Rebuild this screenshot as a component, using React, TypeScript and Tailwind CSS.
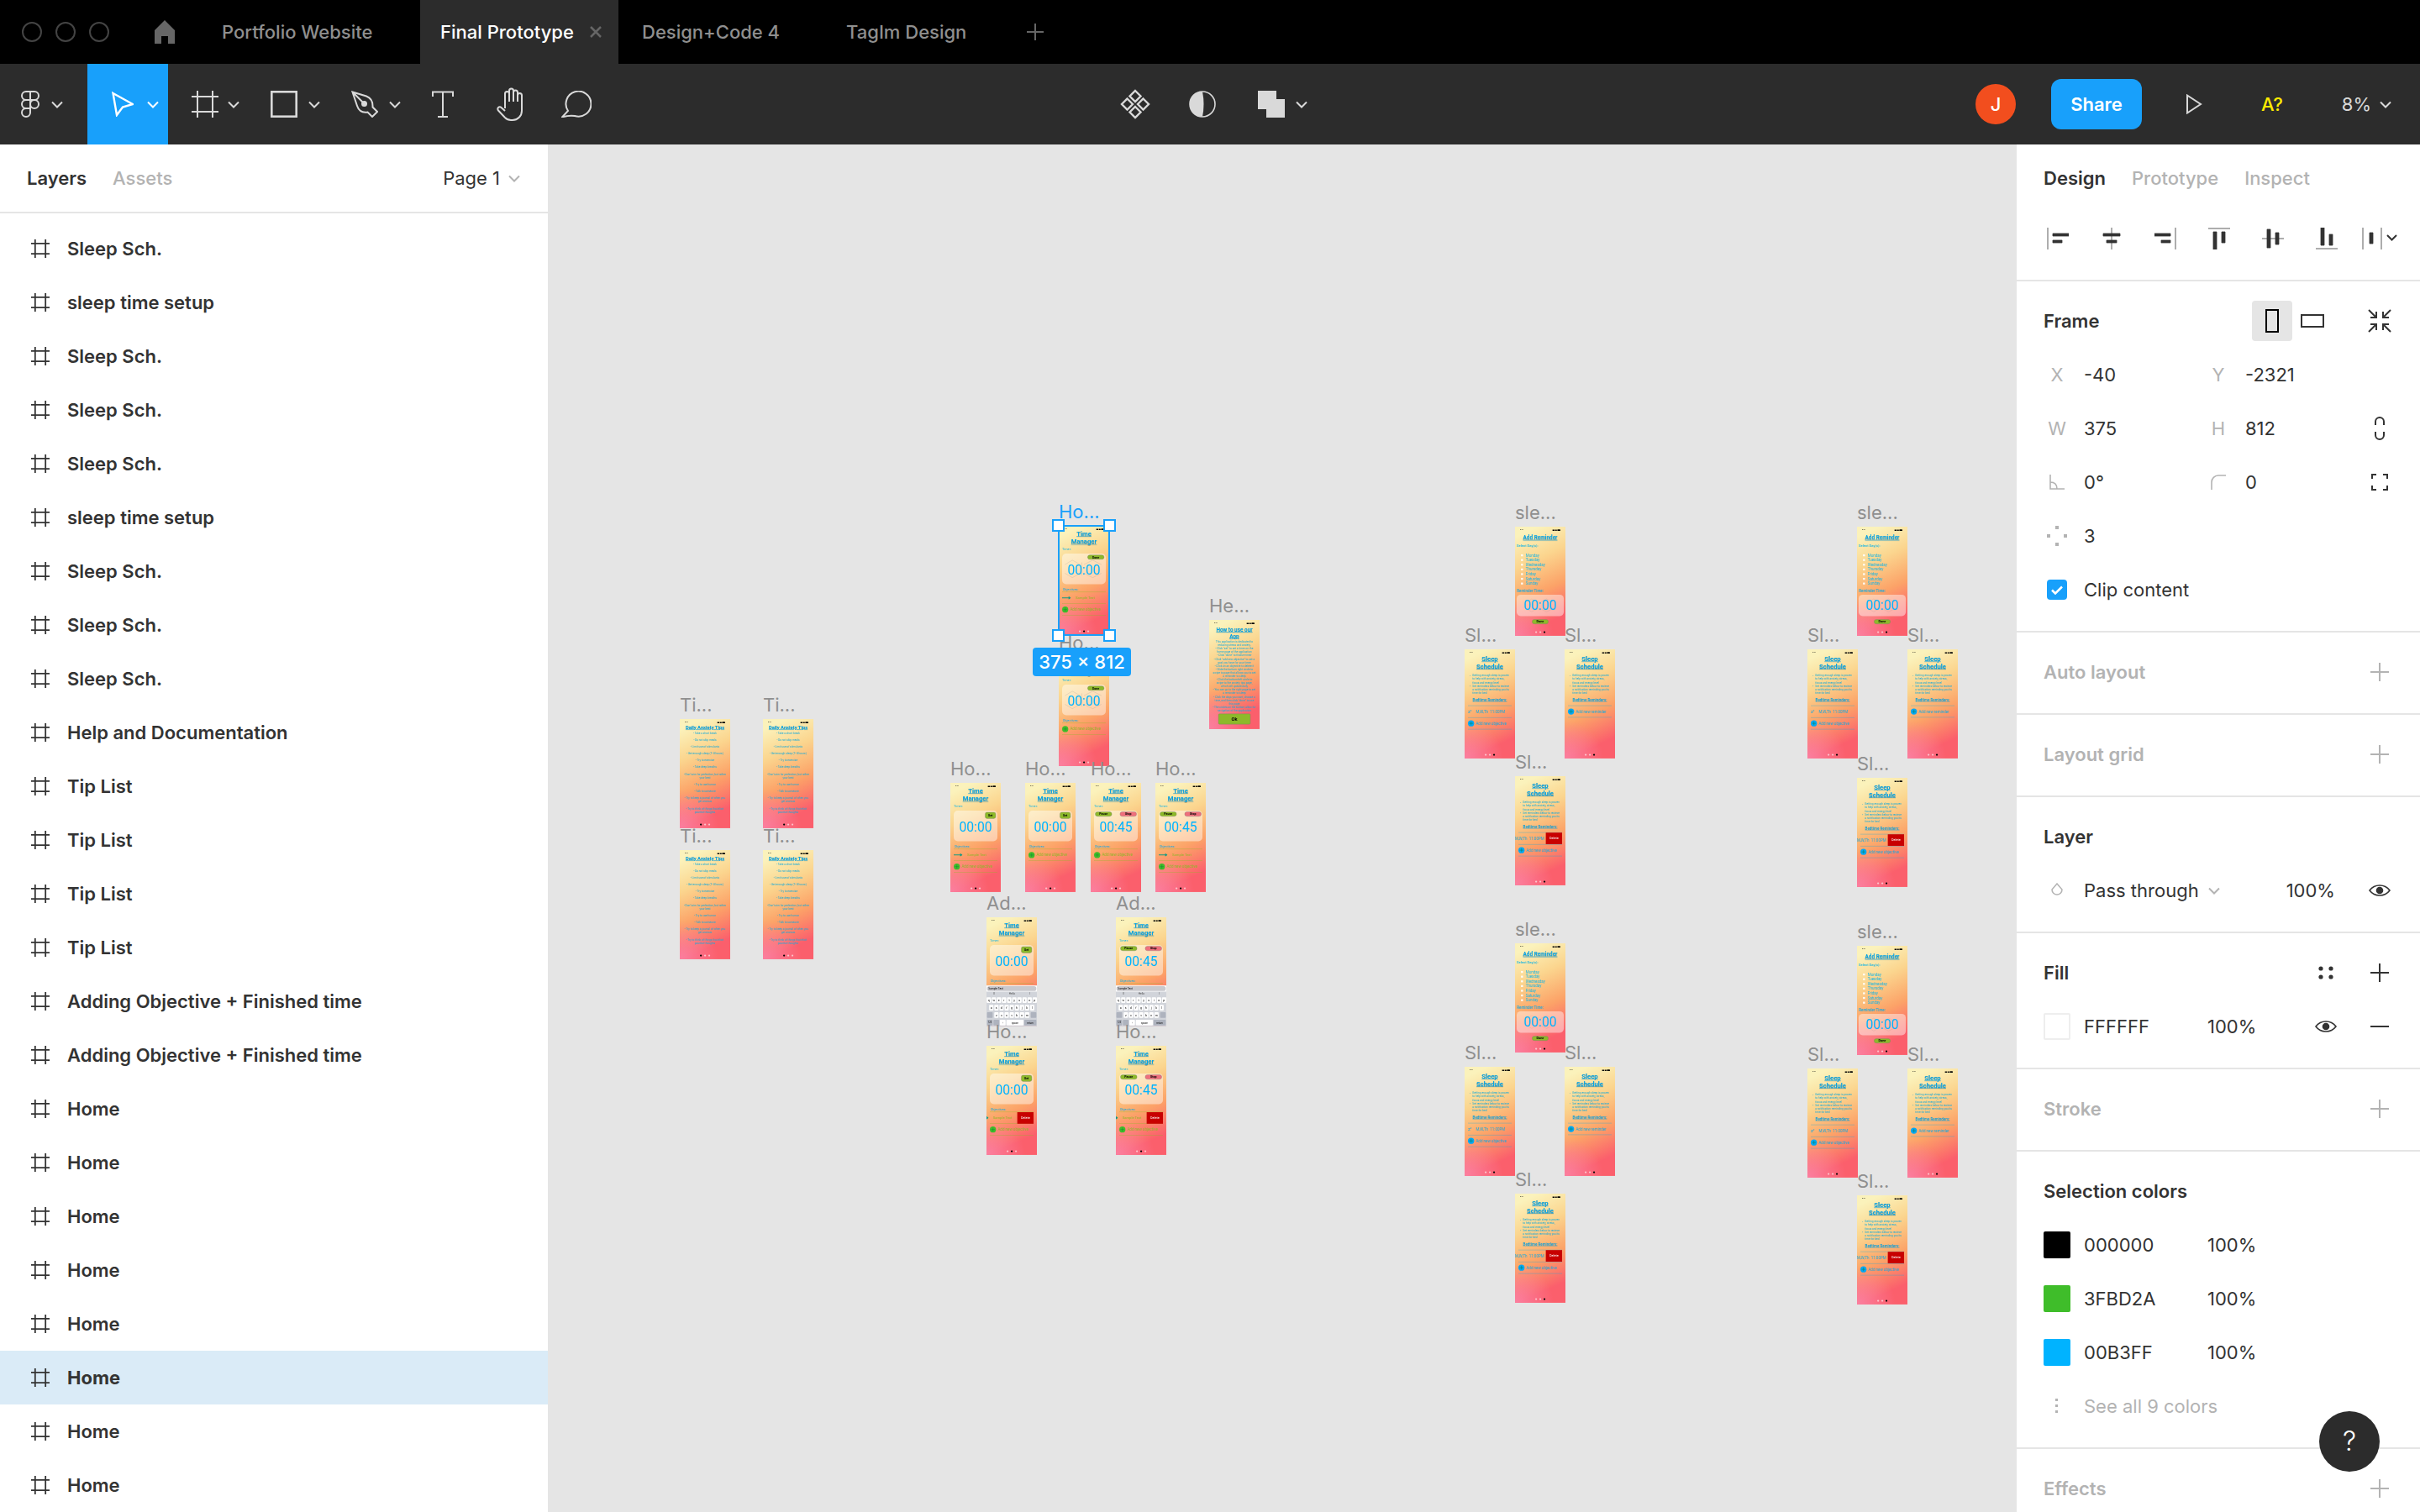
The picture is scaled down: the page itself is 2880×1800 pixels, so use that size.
import type { ReactNode } from 'react';

const CANVAS_LEFT = 652;
const CANVAS_TOP = 172;

const LAYERS = [
  'Sleep Sch.', 'sleep time setup', 'Sleep Sch.', 'Sleep Sch.', 'Sleep Sch.', 'sleep time setup', 'Sleep Sch.', 'Sleep Sch.', 'Sleep Sch.',
  'Help and Documentation', 'Tip List', 'Tip List', 'Tip List', 'Tip List', 'Adding Objective + Finished time', 'Adding Objective + Finished time',
  'Home', 'Home', 'Home', 'Home', 'Home', 'Home', 'Home', 'Home',
];

const TIPS = [
  '- Take a short break', '- Do not skip meals', '- Limit use of stimulants', '- Get enough sleep (7- 8 hours)', '- Try to exercise', '- Take deep breaths',
  "- Don't aim for perfection, but rather your best", '- Try to use humor', '- Talk to someone', '- Try to keep a journal of when you get anxious', '- Try to think of things that elicit positive thoughts',
];

const HELP_LINES = [
  'This application is dedicated to reducing stress and anxiety.',
  '- Click "set" to set a timer on the home page of the application',
  '- Click "done" to finalize timer',
  '- Click "add new objective" to set a goal you have for your timer',
  '- Click on an objective to delete it',
  '- Slide the bottom right circle to swipe to page that allows you to set a reminder to sleep',
  '- Click the bottom-left circle to swipe to the anxiety tips page, which will update daily',
  '- You can go to the right page to set a reminder to sleep',
  '- Click the days you want, choose a time, and then click "done" to use this page',
  '- The circles on the bottom allow for navigation of the application',
];

function Chevron({ className = 'text-[#d9d9d9]' }: { className?: string }) {
  return (
    <svg width="14" height="9" viewBox="0 0 14 9" fill="none" stroke="currentColor" strokeWidth="2" className={`shrink-0 ${className}`}>
      <path d="M1 1.5l6 6 6-6" />
    </svg>
  );
}

function FrameGlyph({ size = 32, className = '' }: { size?: number; className?: string }) {
  return (
    <svg width={size} height={size} viewBox="0 0 32 32" fill="none" stroke="currentColor" strokeWidth={size < 30 ? 2.6 : 2} className={`shrink-0 ${className}`}>
      <path d="M7 0v32M25 0v32M0 7h32M0 25h32" />
    </svg>
  );
}

function PlusIcon({ muted = false }: { muted?: boolean }) {
  return (
    <svg width="22" height="22" viewBox="0 0 22 22" stroke={muted ? '#b3b3b3' : '#333'} strokeWidth="2">
      <path d="M0 11h22M11 0v22" />
    </svg>
  );
}

function EyeIcon() {
  return (
    <svg width="26" height="14" viewBox="0 0 26 14" fill="none" stroke="#333" strokeWidth="1.6">
      <path d="M1 7c3-4 7.500-6 12-6s9 2 12 6c-3 4-7.500 6-12 6S4 11 1 7z" />
      <circle cx="13" cy="7" r="3.500" fill="#333" />
    </svg>
  );
}

function AlignIcon({ kind }: { kind: number }) {
  const bars: Record<number, ReactNode> = {
    0: <path d="M1 0v26M7 7h19v3H7zM7 15h11v3H7z" />,
    1: <path d="M13 0v26M3 7h20v3H3zM7 15h12v3H7z" />,
    2: <path d="M25 0v26M0 7h19v3H0zM8 15h11v3H8z" />,
    3: <path d="M0 1h26M6 5h4v21H6zM16 5h4v13h-4z" />,
    4: <path d="M0 13h26M6 2h4v22H6zM16 6h4v14h-4z" />,
    5: <path d="M0 25h26M6 0h4v21H6zM16 8h4v13h-4z" />,
  };
  return (
    <svg width="26" height="26" viewBox="0 0 26 26" fill="#333" stroke="#333" strokeWidth="0.8">
      {bars[kind]}
    </svg>
  );
}

function TabBar() {
  return (
    <div className="flex h-[76px] shrink-0 items-center bg-black text-[22px] font-medium text-[#8f8f8f]">
      <div className="flex w-[160px] gap-[16px] pl-[26px]">
        <span className="h-[24px] w-[24px] rounded-full border-2 border-[#444]" />
        <span className="h-[24px] w-[24px] rounded-full border-2 border-[#444]" />
        <span className="h-[24px] w-[24px] rounded-full border-2 border-[#444]" />
      </div>
      <svg width="24" height="28" viewBox="0 0 24 28" fill="#666" className="ml-[24px]">
        <path d="M12 0L24 12v16h-8v-9H8v9H0V12z" />
      </svg>
      <div className="ml-[32px] flex h-full w-[260px] items-center pl-[24px]">Portfolio Website</div>
      <div className="flex h-full w-[236px] items-center gap-[18px] bg-[#2c2c2c] pl-[24px] text-white">
        Final Prototype
        <svg width="16" height="16" viewBox="0 0 16 16" stroke="#666" strokeWidth="2.500"><path d="M2 2l12 12M14 2L2 14" /></svg>
      </div>
      <div className="flex h-full w-[247px] items-center pl-[28px]">Design+Code 4</div>
      <div className="flex h-full w-[225px] items-center pl-[24px]">TagIm Design</div>
      <svg width="20" height="20" viewBox="0 0 20 20" stroke="#666" strokeWidth="2" className="ml-[14px]"><path d="M0 10h20M10 0v20" /></svg>
    </div>
  );
}

function Toolbar() {
  const ic = 'fill-none stroke-[#d9d9d9] shrink-0';
  return (
    <div className="flex h-[96px] shrink-0 items-center bg-[#2c2c2c]">
      <div className="flex w-[104px] items-center gap-[14px] pl-[25px]">
        <svg width="22" height="32" viewBox="0 0 22 32" strokeWidth="2" className={ic}>
          <path d="M11 1H6a5 5 0 0 0 0 10h5zM11 1h5a5 5 0 0 1 0 10h-5zM11 11H6a5 5 0 0 0 0 10h5zM11 16a5 5 0 1 0 10 0a5 5 0 1 0-10 0zM11 21H6a5 5 0 1 0 5 5z" />
        </svg>
        <Chevron />
      </div>
      <div className="flex h-full w-[96px] items-center gap-[16px] bg-[#18a0fb] pl-[29px]">
        <svg width="26" height="30" viewBox="0 0 26 30" fill="none" stroke="white" strokeWidth="2.400" className="shrink-0">
          <path d="M1.500 2L25 15l-12 3.500L6 28z" />
        </svg>
        <Chevron className="text-white" />
      </div>
      <div className="flex w-[104px] items-center gap-[11px] pl-[28px] text-[#d9d9d9]">
        <FrameGlyph />
        <Chevron />
      </div>
      <div className="flex w-[96px] items-center gap-[13px] pl-[18px]">
        <svg width="32" height="32" viewBox="0 0 32 32" strokeWidth="2.600" className={ic}><rect x="1.300" y="1.300" width="29.400" height="29.400" /></svg>
        <Chevron />
      </div>
      <div className="flex w-[96px] items-center gap-[13px] pl-[18px]">
        <svg width="32" height="32" viewBox="0 0 32 32" strokeWidth="2" className={ic}>
          <path d="M1.500 1.500L18 6.500Q26 9.500 25.500 19.500L31 25l-6 6-5.500-5.500Q10 27 7 18zM1.500 1.500L15 15" />
          <circle cx="15.500" cy="15.500" r="2.500" fill="#d9d9d9" />
        </svg>
        <Chevron />
      </div>
      <svg width="26" height="32" viewBox="0 0 26 32" strokeWidth="2" className={`${ic} ml-[18px]`}>
        <path d="M1 7V1.500h24V7M13 1.500V31M7 31h12" />
      </svg>
      <svg width="36" height="40" viewBox="0 0 36 40" strokeWidth="2" className={`${ic} ml-[51px]`}>
        <path d="M10 25V7.500a2.500 2.500 0 0 1 5 0V17M15 17V4a2.500 2.500 0 0 1 5 0v13M20 17V6a2.500 2.500 0 0 1 5 0v11M25 17V9.500a2.500 2.500 0 0 1 5 0V28a11 11 0 0 1-11 11h-2c-3 0-5-1-7-3L2 27.500a2.400 2.400 0 0 1 3.500-3.500L10 28" />
      </svg>
      <svg width="36" height="32" viewBox="0 0 36 32" strokeWidth="2" className={`${ic} ml-[41px]`}>
        <path d="M8 24A15 15 0 1 1 16 30Q9 29 1 31.500z" />
      </svg>
      <svg width="36" height="36" viewBox="0 0 36 36" strokeWidth="2.400" className={`${ic} ml-[629px]`}>
        <path d="M18 2l6.500 6.500L18 15l-6.500-6.500zM8.500 11.500L15 18l-6.500 6.500L2 18zM27.500 11.500L34 18l-6.500 6.500L21 18zM18 21l6.500 6.500L18 34l-6.500-6.500z" />
      </svg>
      <svg width="32" height="32" viewBox="0 0 32 32" strokeWidth="1.600" className={`${ic} ml-[46px]`}>
        <circle cx="16" cy="16" r="15" />
        <path d="M16 1A15 15 0 0 0 16 31Q19 16 16 1z" fill="#d9d9d9" stroke="none" />
      </svg>
      <svg width="32" height="32" viewBox="0 0 32 32" fill="#d9d9d9" className="ml-[50px] shrink-0">
        <path d="M0 0h22v10h10v22H10V22H0z" />
      </svg>
      <span className="ml-[13px]"><Chevron /></span>
      <div className="ml-[795px] flex h-[48px] w-[48px] shrink-0 items-center justify-center rounded-full bg-[#f24e1e] text-[22px] font-medium text-white">J</div>
      <div className="ml-[42px] flex h-[60px] w-[108px] shrink-0 items-center justify-center rounded-[12px] bg-[#18a0fb] text-[22px] font-semibold text-white">Share</div>
      <svg width="20" height="24" viewBox="0 0 20 24" fill="none" stroke="#d9d9d9" strokeWidth="2" className="ml-[52px] shrink-0"><path d="M2 1.500L18 12 2 22.500z" /></svg>
      <span className="ml-[70px] text-[22px] font-medium text-[#ffeb00]">A?</span>
      <span className="ml-[70px] text-[22px] text-[#d9d9d9]">8%</span>
      <span className="ml-[10px]"><Chevron /></span>
    </div>
  );
}

function LayersPanel() {
  return (
    <div className="flex w-[652px] shrink-0 flex-col overflow-hidden bg-white text-[22px] text-[#333]">
      <div className="flex h-[82px] shrink-0 items-center border-b-2 border-[#e5e5e5] pl-[32px] pr-[33px]">
        <span className="font-semibold">Layers</span>
        <span className="ml-[31px] font-medium text-[#b3b3b3]">Assets</span>
        <span className="ml-auto font-normal">Page 1</span>
        <Chevron className="ml-[10px] text-[#b3b3b3]" />
      </div>
      <div className="pt-[10px]">
        {LAYERS.map((name, i) => (
          <div key={i} className={`flex h-[64px] items-center pl-[37px] ${i === 21 ? 'bg-[#daebf7] font-bold' : 'font-semibold'}`}>
            <FrameGlyph size={22} className="text-[#333]" />
            <span className="ml-[21px]">{name}</span>
          </div>
        ))}
      </div>
    </div>
  );
}

function Section({ title, muted = false, action, children }: { title: string; muted?: boolean; action?: ReactNode; children?: ReactNode }) {
  return (
    <div className="shrink-0 border-b-2 border-[#e5e5e5] pb-[17px] pt-[15px]">
      <div className="flex h-[64px] items-center pl-[32px] pr-[37px]">
        <span className={`font-semibold ${muted ? 'text-[#b3b3b3]' : 'text-[#333]'}`}>{title}</span>
        <div className="ml-auto flex items-center">{action}</div>
      </div>
      {children}
    </div>
  );
}

function PropRow({ children }: { children: ReactNode }) {
  return <div className="relative flex h-[64px] items-center pl-[32px] pr-[37px]">{children}</div>;
}

function Prop({ label, value, width = 'w-[192px]' }: { label: ReactNode; value: string; width?: string }) {
  return (
    <div className={`flex items-center ${width}`}>
      <span className="flex w-[32px] justify-center text-[#b3b3b3]">{label}</span>
      <span className="ml-[16px]">{value}</span>
    </div>
  );
}

function ColorRow({ swatch, hex, border = false, children }: { swatch: string; hex: string; border?: boolean; children?: ReactNode }) {
  return (
    <PropRow>
      <span className={`h-[32px] w-[32px] rounded-[2px] ${swatch} ${border ? 'border-2 border-[#eee]' : ''}`} />
      <span className="ml-[16px] w-[147px]">{hex}</span>
      <span>100%</span>
      {children}
    </PropRow>
  );
}

function DesignPanel() {
  return (
    <div className="flex w-[480px] shrink-0 flex-col overflow-hidden bg-white text-[22px] text-[#333]">
      <div className="shrink-0 border-b-2 border-[#e5e5e5] pb-[17px]">
        <div className="flex h-[80px] items-center gap-[31px] pl-[32px]">
          <span className="font-semibold">Design</span>
          <span className="font-medium text-[#b3b3b3]">Prototype</span>
          <span className="font-medium text-[#b3b3b3]">Inspect</span>
        </div>
        <div className="flex h-[64px] items-center pl-[36px]">
          {[0, 1, 2, 3, 4, 5].map((k) => (
            <span key={k} className="flex w-[64px] shrink-0">
              <AlignIcon kind={k} />
            </span>
          ))}
          <svg width="44" height="26" viewBox="0 0 44 26" fill="#333" stroke="#333" strokeWidth="0.8" className="-ml-[9px] shrink-0">
            <path d="M1 0v26M23 0v26M9 6h4v13H9z" />
            <path d="M30 9l5.500 5.500L41 9" fill="none" strokeWidth="2" />
          </svg>
        </div>
      </div>

      <Section
        title="Frame"
        action={
          <div className="-mr-[3px] flex items-center">
            <span className="flex h-[48px] w-[48px] items-center justify-center rounded-[4px] bg-[#e5e5e5]">
              <span className="h-[28px] w-[16px] border-2 border-black" />
            </span>
            <span className="ml-[10px] h-[16px] w-[28px] border-2 border-[#333]" />
            <svg width="28" height="28" viewBox="0 0 28 28" fill="none" stroke="#333" strokeWidth="2" className="ml-[52px]">
              <path d="M1 1l9 9M3 10h7V3M27 1l-9 9M25 10h-7V3M1 27l9-9M3 18h7v7M27 27l-9-9M25 18h-7v7" />
            </svg>
          </div>
        }
      >
        <PropRow>
          <Prop label="X" value="-40" />
          <Prop label="Y" value="-2321" />
        </PropRow>
        <PropRow>
          <Prop label="W" value="375" />
          <Prop label="H" value="812" />
          <svg width="12" height="28" viewBox="0 0 12 28" fill="none" stroke="#333" strokeWidth="2" className="ml-auto mr-[5px]">
            <path d="M1 10V6a5 5 0 0 1 10 0v4M1 18v4a5 5 0 0 0 10 0v-4" />
          </svg>
        </PropRow>
        <PropRow>
          <Prop
            label={
              <svg width="18" height="18" viewBox="0 0 18 18" fill="none" stroke="#b3b3b3" strokeWidth="1.600"><path d="M1 0v17h17M1 9c5 0 8 3 8 8" /></svg>
            }
            value="0°"
          />
          <Prop
            label={
              <svg width="18" height="18" viewBox="0 0 18 18" fill="none" stroke="#b3b3b3" strokeWidth="1.600"><path d="M1 18V9a8 8 0 0 1 8-8h9" /></svg>
            }
            value="0"
          />
          <svg width="20" height="20" viewBox="0 0 20 20" fill="none" stroke="#333" strokeWidth="2" className="ml-auto mr-[1px]">
            <path d="M1 6V1h5M14 1h5v5M1 14v5h5M14 19h5v-5" />
          </svg>
        </PropRow>
        <PropRow>
          <Prop
            label={
              <svg width="24" height="24" viewBox="0 0 24 24" fill="#b3b3b3"><path d="M10 0h4v4h-4zM0 10h4v4H0zM20 10h4v4h-4zM10 20h4v4h-4z" /></svg>
            }
            value="3"
          />
        </PropRow>
        <PropRow>
          <span className="ml-[4px] flex h-[24px] w-[24px] items-center justify-center rounded-[4px] bg-[#18a0fb]">
            <svg width="14" height="11" viewBox="0 0 14 11" fill="none" stroke="white" strokeWidth="2.500"><path d="M1 5.500l4 4 8-8" /></svg>
          </span>
          <span className="ml-[20px]">Clip content</span>
        </PropRow>
      </Section>

      <Section title="Auto layout" muted action={<PlusIcon muted />} />
      <Section title="Layout grid" muted action={<PlusIcon muted />} />

      <Section title="Layer">
        <PropRow>
          <span className="flex w-[32px] justify-center">
            <svg width="18" height="18" viewBox="0 0 18 18" fill="none" stroke="#b3b3b3" strokeWidth="1.500"><path d="M9 1l6 7a6 6 0 1 1-12 0z" /></svg>
          </span>
          <span className="ml-[16px]">Pass through</span>
          <Chevron className="ml-[11px] text-[#b3b3b3]" />
          <span className="ml-[79px]">100%</span>
          <span className="ml-auto mr-[-2px] flex"><EyeIcon /></span>
        </PropRow>
      </Section>

      <Section
        title="Fill"
        action={
          <>
            <svg width="18" height="16" viewBox="0 0 18 16" fill="#333" className="mr-[44px]">
              <circle cx="3" cy="3" r="2.600" /><circle cx="15" cy="3" r="2.600" /><circle cx="3" cy="13" r="2.600" /><circle cx="15" cy="13" r="2.600" />
            </svg>
            <PlusIcon />
          </>
        }
      >
        <ColorRow swatch="bg-white" hex="FFFFFF" border>
          <span className="ml-auto mr-[40px] flex"><EyeIcon /></span>
          <svg width="22" height="2" viewBox="0 0 22 2" stroke="#333" strokeWidth="2"><path d="M0 1h22" /></svg>
        </ColorRow>
      </Section>

      <Section title="Stroke" muted action={<PlusIcon muted />} />

      <Section title="Selection colors">
        <ColorRow swatch="bg-black" hex="000000" />
        <ColorRow swatch="bg-[#3fbd2a]" hex="3FBD2A" />
        <ColorRow swatch="bg-[#00b3ff]" hex="00B3FF" />
        <PropRow>
          <span className="flex w-[32px] justify-center">
            <svg width="4" height="18" viewBox="0 0 4 18" fill="#b3b3b3"><path d="M0 0h3v3H0zM0 7h3v3H0zM0 14h3v3H0z" /></svg>
          </span>
          <span className="ml-[16px] text-[#b3b3b3]">See all 9 colors</span>
        </PropRow>
      </Section>

      <Section title="Effects" muted action={<PlusIcon muted />} />
    </div>
  );
}

/* ---- the phone frames on the canvas, laid out at 375x812 and zoomed down ---- */

function StatusBar() {
  return (
    <div className="flex h-[31px] shrink-0 items-end justify-between px-[38px] text-[13px] font-semibold text-black">
      <span>9:41</span>
      <span className="flex items-center gap-[4px]">
        <span className="h-[9px] w-[16px] bg-black" />
        <span className="h-[9px] w-[12px] bg-black" />
        <span className="h-[10px] w-[22px] rounded-[2px] bg-black" />
      </span>
    </div>
  );
}

function Title({ children }: { children: ReactNode }) {
  return (
    <div className="shrink-0 text-center text-[48px] font-bold leading-[58px] text-[#00a3e8] underline decoration-[3px] [text-shadow:0_3px_3px_rgba(0,0,0,0.25)]">
      {children}
    </div>
  );
}

function Pager({ active }: { active: number }) {
  return (
    <div className="mb-[20px] mt-auto flex shrink-0 justify-center gap-[17px]">
      {[0, 1, 2].map((i) => (
        <span key={i} className={`h-[14px] w-[14px] rounded-full ${i === active ? 'bg-black' : 'bg-white/60'}`} />
      ))}
    </div>
  );
}

function PhoneBg({ children }: { children: ReactNode }) {
  return (
    <div className="relative flex h-[812px] w-[375px] origin-top-left scale-[0.16] flex-col overflow-hidden bg-[radial-gradient(circle_at_0%_100%,#fb7fa0_0%,rgba(251,127,160,0)_32%),linear-gradient(155deg,#fbf2bb_8%,#fbd58e_32%,#fca368_58%,#fb5f6c_84%)] font-['Roboto',sans-serif]">
      {children}
    </div>
  );
}

function PickerLines() {
  return (
    <svg viewBox="0 0 300 200" fill="none" stroke="#666" strokeWidth="1.500" opacity="0.55" className="absolute inset-0 h-full w-full">
      <path d="M20 70L70 40l55 30M150 70l60-30 60 30M20 130l50 30 55-30M150 130l60 30 60-30M135 55v90" />
    </svg>
  );
}

function Pill({ label, className }: { label: string; className: string }) {
  return (
    <span className={`absolute flex items-center justify-center border-2 border-[#777] text-[22px] font-bold text-black ${className}`}>{label}</span>
  );
}

function TimerCard({ time, action }: { time: string; action: 'set' | 'done' | 'run' }) {
  return (
    <div className="relative mx-[25px] mt-[16px] flex h-[227px] shrink-0 items-center justify-center rounded-[30px] bg-white/45 pt-[12px]">
      {action === 'done' && <PickerLines />}
      <span className="relative text-[98px] leading-none text-[#00b3ff]">{time}</span>
      {action === 'set' && <Pill label="Set" className="right-[12px] top-[11px] h-[48px] w-[80px] rounded-[14px] bg-[#8db92a]" />}
      {action === 'done' && <Pill label="Done" className="right-[12px] top-[9px] h-[34px] w-[124px] rounded-full bg-[#8db92a]" />}
      {action === 'run' && (
        <>
          <Pill label="Pause" className="left-[8px] top-[7px] h-[36px] w-[125px] rounded-full bg-[#8db92a]" />
          <Pill label="Stop" className="right-[8px] top-[7px] h-[36px] w-[125px] rounded-full bg-[#ee6f7c]" />
        </>
      )}
    </div>
  );
}

function Lined({ tall = 'h-[87px]', children }: { tall?: string; children: ReactNode }) {
  return <div className={`relative mx-[25px] flex shrink-0 items-center border-b-2 border-[#8fb72a] ${tall}`}>{children}</div>;
}

function AddRow({ label = 'Add new objective', color = 'bg-[#3fbd2a]', text = 'text-[#8fb72a]', lineTall = 'h-[87px]' }: { label?: string; color?: string; text?: string; lineTall?: string }) {
  return (
    <Lined tall={lineTall}>
      <span className={`flex h-[46px] w-[46px] items-center justify-center rounded-full ${color}`}>
        <svg width="30" height="30" viewBox="0 0 30 30" stroke="#14803c" strokeWidth="3"><path d="M0 15h30M15 0v30" /></svg>
      </span>
      <span className={`ml-[13px] text-[28px] ${text}`}>{label}</span>
    </Lined>
  );
}

function HomeFrame({ time, action, objective = 'none', keyboard = false }: { time: string; action: 'set' | 'done' | 'run'; objective?: 'none' | 'arrow' | 'delete'; keyboard?: boolean }) {
  return (
    <PhoneBg>
      <StatusBar />
      <Title>
        Time
        <br />
        Manager
      </Title>
      <div className="mt-[14px] h-[30px] shrink-0 pl-[25px] text-[24px] leading-[30px] text-[#16b4e6]">Timer:</div>
      <TimerCard time={time} action={action} />
      <div className="mx-[25px] mt-[23px] h-[37px] shrink-0 border-b-2 border-[#8fb72a] pl-[4px] text-[24px] leading-[30px] text-[#16a8e0]">Objectives:</div>
      {keyboard ? (
        <KeyboardPanel />
      ) : (
        <>
          {objective === 'arrow' && (
            <Lined tall="h-[86px]">
              <svg width="66" height="24" viewBox="0 0 66 24" fill="#0f9a84"><path d="M0 9h48V0l18 12-18 12v-9H0z" /></svg>
              <span className="ml-[34px] text-[26px] text-[#8fb72a]">Sample Text</span>
            </Lined>
          )}
          {objective === 'delete' && (
            <Lined tall="h-[86px]">
              <svg width="16" height="24" viewBox="0 0 16 24" fill="#0f9a84" className="-ml-[25px]"><path d="M0 0l16 12L0 24z" /></svg>
              <span className="ml-[32px] text-[26px] text-[#8fb72a]">Sample Text</span>
              <span className="absolute right-0 top-0 flex h-[86px] w-[121px] items-center justify-center bg-[#c80000] text-[24px] text-white">Delete</span>
            </Lined>
          )}
          <AddRow />
          <Pager active={1} />
        </>
      )}
    </PhoneBg>
  );
}

function KeyRow({ keys }: { keys: string[] }) {
  return (
    <div className="flex justify-center gap-[6px]">
      {keys.map((k) => (
        <span key={k} className="flex h-[42px] w-[32px] items-center justify-center rounded-[5px] bg-white text-[22px] text-black">{k}</span>
      ))}
    </div>
  );
}

function KeyboardPanel() {
  return (
    <div className="absolute inset-x-0 bottom-0 flex h-[304px] flex-col bg-[#d1d4da]">
      <div className="flex h-[45px] items-center bg-white px-[4px]">
        <span className="flex h-[36px] w-full items-center rounded-full bg-[#c9c9ce] pl-[10px] text-[20px] text-black">Sample Text</span>
      </div>
      <div className="flex h-[36px] items-center justify-around text-[20px] text-[#555]">
        <span>II</span>
        <span>Hello</span>
        <span>I</span>
      </div>
      <div className="flex flex-col gap-[14px] pt-[6px]">
        <KeyRow keys={['q', 'w', 'e', 'r', 't', 'y', 'u', 'i', 'o', 'p']} />
        <KeyRow keys={['a', 's', 'd', 'f', 'g', 'h', 'j', 'k', 'l']} />
        <div className="flex items-center justify-between px-[4px]">
          <span className="h-[42px] w-[42px] rounded-[5px] bg-[#aeb3be]" />
          <KeyRow keys={['z', 'x', 'c', 'v', 'b', 'n', 'm']} />
          <span className="h-[42px] w-[42px] rounded-[5px] bg-[#aeb3be]" />
        </div>
        <div className="flex items-center gap-[6px] px-[4px]">
          <span className="flex h-[42px] w-[42px] items-center justify-center rounded-[5px] bg-[#aeb3be] text-[16px]">123</span>
          <span className="h-[42px] w-[42px] rounded-[5px] bg-[#aeb3be]" />
          <span className="flex h-[42px] w-[42px] items-center justify-center rounded-[5px] bg-white text-[20px]">&#8249;</span>
          <span className="flex h-[42px] flex-1 items-center justify-center rounded-[5px] bg-white text-[18px]">space</span>
          <span className="flex h-[42px] w-[90px] items-center justify-center rounded-[5px] bg-[#aeb3be] text-[18px]">return</span>
        </div>
      </div>
    </div>
  );
}

function TipsFrame() {
  return (
    <PhoneBg>
      <StatusBar />
      <div className="mt-[10px] shrink-0 text-center text-[36px] font-bold leading-[44px] text-[#00a3e8] underline [text-shadow:0_2px_2px_rgba(0,0,0,0.2)]">Daily Anxiety Tips</div>
      <div className="mt-[5px] flex flex-col gap-[25px] px-[30px] text-center text-[20px] leading-[26px] text-[#14a9dc]">
        {TIPS.map((t) => (
          <p key={t}>{t}</p>
        ))}
      </div>
      <Pager active={0} />
    </PhoneBg>
  );
}

function HelpFrame() {
  return (
    <PhoneBg>
      <StatusBar />
      <div className="mt-[20px] shrink-0 text-center text-[40px] font-bold leading-[48px] text-[#00a3e8] underline [text-shadow:0_2px_2px_rgba(0,0,0,0.2)]">
        How to use our
        <br />
        App
      </div>
      <div className="mt-[3px] px-[26px] text-center text-[20px] leading-[25.600px] text-[#14a9dc]">
        {HELP_LINES.map((t) => (
          <p key={t}>{t}</p>
        ))}
      </div>
      <div className="mx-auto mb-[35px] mt-auto flex h-[79px] w-[239px] shrink-0 items-center justify-center rounded-[8px] border-2 border-[#777] bg-[#8db92a] text-[36px] font-bold text-black">Ok</div>
    </PhoneBg>
  );
}

function ReminderFrame() {
  return (
    <PhoneBg>
      <StatusBar />
      <div className="mt-[28px] shrink-0 text-center text-[40px] font-bold leading-[48px] text-[#00a3e8] underline [text-shadow:0_2px_2px_rgba(0,0,0,0.2)]">Add Reminder</div>
      <div className="mt-[20px] shrink-0 pl-[12px] text-[26px] font-medium leading-[30px] text-[#16b4e6]">Select Day(s):</div>
      <div className="mt-[38px] flex flex-col pl-[45px] text-[28px] leading-[35px] text-[#16b4e6]">
        {['Monday', 'Tuesday', 'Wednesday', 'Thursday', 'Friday', 'Saturday', 'Sunday'].map((d) => (
          <div key={d} className="flex items-center gap-[21px]">
            <span className="h-[14px] w-[14px] bg-white" />
            {d}
          </div>
        ))}
      </div>
      <div className="mt-[20px] shrink-0 pl-[14px] text-[28px] font-medium leading-[34px] text-[#16a8e0]">Reminder Time:</div>
      <div className="relative mx-[12px] mt-[12px] flex h-[159px] shrink-0 items-center justify-center rounded-[30px] bg-white/45">
        <PickerLines />
        <span className="relative text-[98px] leading-none text-[#00b3ff]">00:00</span>
      </div>
      <div className="mx-auto mt-[25px] flex h-[34px] w-[123px] shrink-0 items-center justify-center rounded-full border-2 border-[#777] bg-[#8db92a] text-[24px] font-bold text-black">Done</div>
      <Pager active={2} />
    </PhoneBg>
  );
}

function SleepFrame({ variant }: { variant: 'list' | 'empty' | 'delete' }) {
  const line = 'border-[#16a8e0]';
  return (
    <PhoneBg>
      <StatusBar />
      <div className="mt-[11px]">
        <Title>
          Sleep
          <br />
          Schedule
        </Title>
      </div>
      <ul className="ml-[58px] mt-[24px] w-[277px] shrink-0 list-disc text-[20px] leading-[26px] text-[#14a9dc]">
        <li>Getting enough sleep is proven to help with anxiety, stress, focus and energy level</li>
        <li>Set reminders below to recieve a notification reminding you its time for bed</li>
      </ul>
      <div className="mt-[24px] shrink-0 text-center text-[28px] font-bold leading-[34px] text-[#159fd6] underline">Bedtime Reminders:</div>
      <div className={`mx-[25px] mt-[22px] shrink-0 border-b-2 ${line}`} />
      {variant !== 'empty' && (
        <div className={`relative mx-[25px] flex h-[88px] shrink-0 items-center border-b-2 ${line} text-[28px] text-[#16a8e0]`}>
          {variant === 'list' && <span className="mr-[32px] text-[36px] leading-none">z<sup className="text-[20px]">z</sup></span>}
          <span className={variant === 'delete' ? '-ml-[25px] whitespace-nowrap' : 'whitespace-nowrap'}>M,W,Th&nbsp;&nbsp;11:00PM</span>
          {variant === 'delete' && <span className="absolute right-0 top-0 flex h-[86px] w-[121px] items-center justify-center bg-[#c80000] text-[24px] text-white">Delete</span>}
        </div>
      )}
      <AddRow label={variant === 'empty' ? 'Add new reminder' : 'Add new objective'} color="bg-[#00a8f5]" text="text-[#16a8e0]" lineTall="h-[87px] !border-[#16a8e0]" />
      <Pager active={2} />
    </PhoneBg>
  );
}

type FrameSpec = { x: number; y: number; label: string; node: ReactNode; selected?: boolean };

const FRAMES: FrameSpec[] = [
  { x: 809, y: 856, label: 'Ti...', node: <TipsFrame /> },
  { x: 908, y: 856, label: 'Ti...', node: <TipsFrame /> },
  { x: 809, y: 1012, label: 'Ti...', node: <TipsFrame /> },
  { x: 908, y: 1012, label: 'Ti...', node: <TipsFrame /> },
  { x: 1260, y: 782, label: 'Ho...', node: <HomeFrame time="00:00" action="done" /> },
  { x: 1439, y: 738, label: 'He...', node: <HelpFrame /> },
  { x: 1131, y: 932, label: 'Ho...', node: <HomeFrame time="00:00" action="set" objective="arrow" /> },
  { x: 1220, y: 932, label: 'Ho...', node: <HomeFrame time="00:00" action="set" /> },
  { x: 1298, y: 932, label: 'Ho...', node: <HomeFrame time="00:45" action="run" /> },
  { x: 1375, y: 932, label: 'Ho...', node: <HomeFrame time="00:45" action="run" objective="arrow" /> },
  { x: 1174, y: 1092, label: 'Ad...', node: <HomeFrame time="00:00" action="set" keyboard /> },
  { x: 1328, y: 1092, label: 'Ad...', node: <HomeFrame time="00:45" action="run" keyboard /> },
  { x: 1174, y: 1245, label: 'Ho...', node: <HomeFrame time="00:00" action="set" objective="delete" /> },
  { x: 1328, y: 1245, label: 'Ho...', node: <HomeFrame time="00:45" action="run" objective="delete" /> },
  { x: 1803, y: 627, label: 'sle...', node: <ReminderFrame /> },
  { x: 1743, y: 773, label: 'Sl...', node: <SleepFrame variant="list" /> },
  { x: 1862, y: 773, label: 'Sl...', node: <SleepFrame variant="empty" /> },
  { x: 1803, y: 924, label: 'Sl...', node: <SleepFrame variant="delete" /> },
  { x: 2210, y: 627, label: 'sle...', node: <ReminderFrame /> },
  { x: 2151, y: 773, label: 'Sl...', node: <SleepFrame variant="list" /> },
  { x: 2270, y: 773, label: 'Sl...', node: <SleepFrame variant="empty" /> },
  { x: 2210, y: 926, label: 'Sl...', node: <SleepFrame variant="delete" /> },
  { x: 1803, y: 1123, label: 'sle...', node: <ReminderFrame /> },
  { x: 1743, y: 1270, label: 'Sl...', node: <SleepFrame variant="list" /> },
  { x: 1862, y: 1270, label: 'Sl...', node: <SleepFrame variant="empty" /> },
  { x: 1803, y: 1421, label: 'Sl...', node: <SleepFrame variant="delete" /> },
  { x: 2210, y: 1126, label: 'sle...', node: <ReminderFrame /> },
  { x: 2151, y: 1272, label: 'Sl...', node: <SleepFrame variant="list" /> },
  { x: 2270, y: 1272, label: 'Sl...', node: <SleepFrame variant="empty" /> },
  { x: 2210, y: 1423, label: 'Sl...', node: <SleepFrame variant="delete" /> },
  { x: 1260, y: 626, label: 'Ho...', node: <HomeFrame time="00:00" action="done" objective="arrow" />, selected: true },
];

function Handle({ className }: { className: string }) {
  return <span className={`absolute h-[15px] w-[15px] border-2 border-[#18a0fb] bg-white ${className}`} />;
}

function CanvasFrame({ x, y, label, node, selected }: FrameSpec) {
  return (
    <div className="absolute h-[130px] w-[60px]" style={{ left: x - CANVAS_LEFT, top: y - CANVAS_TOP }}>
      <span className={`absolute bottom-full left-0 mb-[2px] whitespace-nowrap text-[22px] leading-[29px] ${selected ? 'text-[#18a0fb]' : 'text-[#8f8f8f]'}`}>{label}</span>
      {node}
      {selected && (
        <>
          <span className="absolute -inset-[1px] border-2 border-[#18a0fb]" />
          <Handle className="-left-[8px] -top-[8px]" />
          <Handle className="-right-[8px] -top-[8px]" />
          <Handle className="-bottom-[8px] -left-[8px]" />
          <Handle className="-bottom-[8px] -right-[8px]" />
          <span className="absolute left-[-31px] top-[145px] flex h-[34px] w-[117px] items-center justify-center whitespace-nowrap rounded-[4px] bg-[#18a0fb] text-[22px] font-medium text-white">375 × 812</span>
        </>
      )}
    </div>
  );
}

export default function App() {
  return (
    <div className="relative flex h-screen w-screen flex-col overflow-hidden bg-[#e5e5e5] font-['Inter',sans-serif]">
      <TabBar />
      <Toolbar />
      <div className="flex min-h-0 flex-1">
        <LayersPanel />
        <div className="relative flex-1 overflow-hidden bg-[#e5e5e5]">
          {FRAMES.map((f, i) => (
            <CanvasFrame key={i} {...f} />
          ))}
        </div>
        <DesignPanel />
      </div>
      <div className="absolute left-[2760px] top-[1680px] flex h-[72px] w-[72px] items-center justify-center rounded-full bg-[#2c2c2c] text-[32px] font-light text-white">?</div>
    </div>
  );
}
